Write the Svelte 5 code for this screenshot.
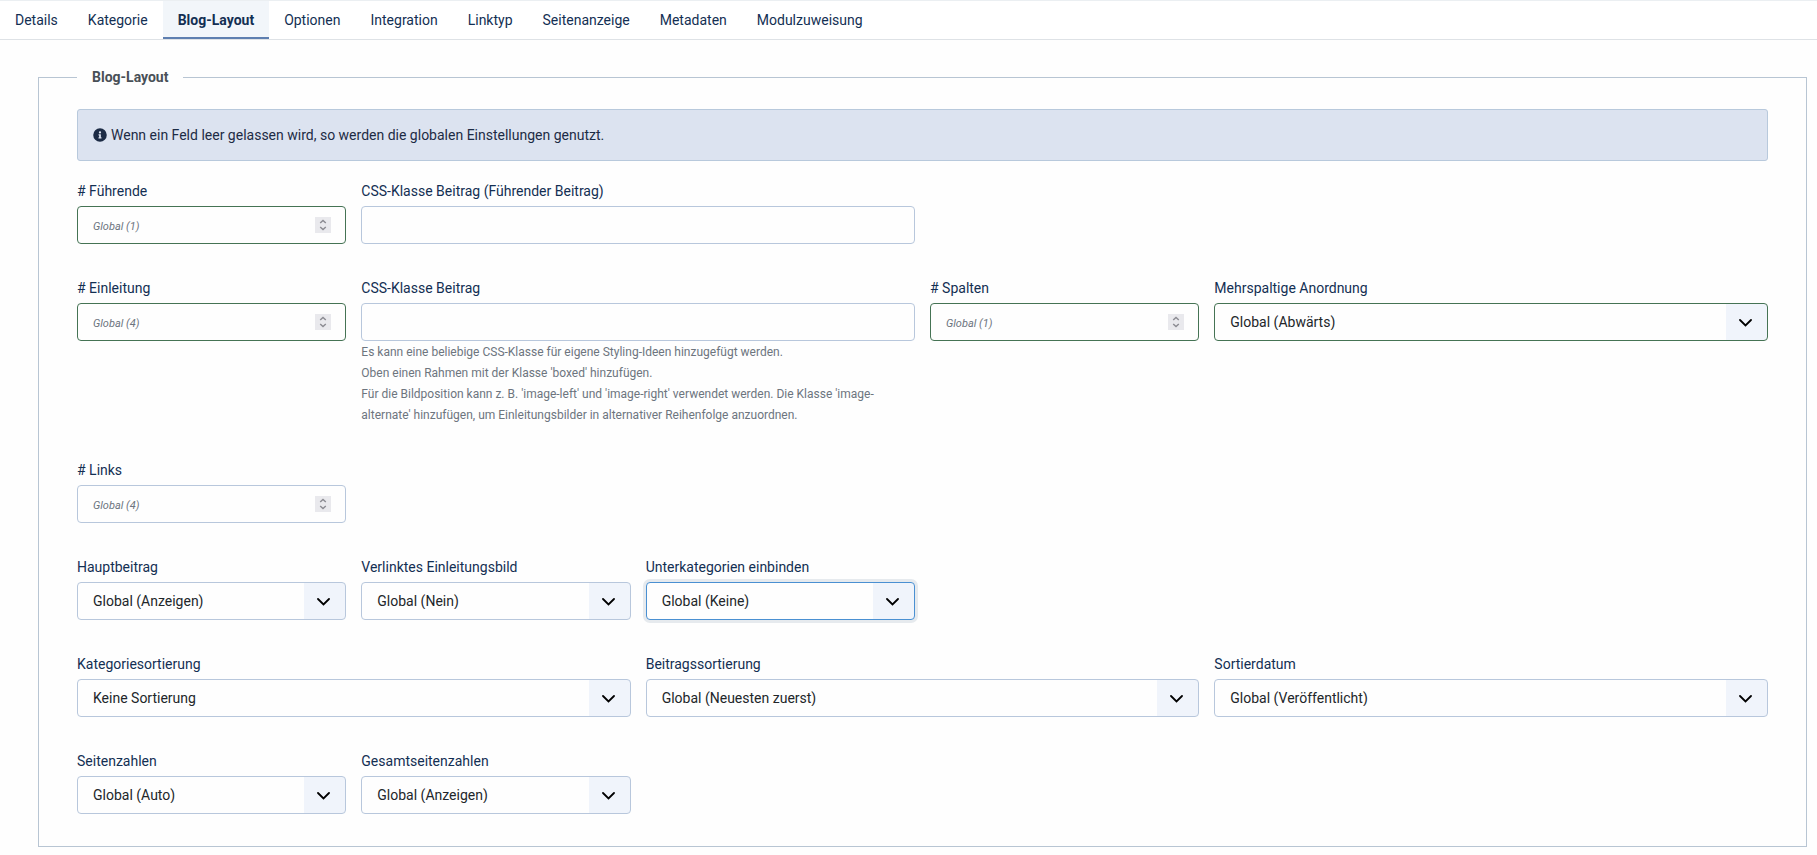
<script lang="ts">
    const tabs = [
        "Details",
        "Kategorie",
        "Blog-Layout",
        "Optionen",
        "Integration",
        "Linktyp",
        "Seitenanzeige",
        "Metadaten",
        "Modulzuweisung",
    ];
    let active = $state("Blog-Layout");

    type Field = {
        id: string;
        label: string;
        type: "number" | "text" | "select";
        span: number;
        value?: string;
        valid?: boolean;
        focused?: boolean;
        help?: string[];
    };

    const rows: Field[][] = [
        [
            { id: "leading", label: "# Führende", type: "number", span: 1, value: "Global (1)", valid: true },
            { id: "leading_class", label: "CSS-Klasse Beitrag (Führender Beitrag)", type: "text", span: 2 },
        ],
        [
            { id: "intro", label: "# Einleitung", type: "number", span: 1, value: "Global (4)", valid: true },
            {
                id: "intro_class",
                label: "CSS-Klasse Beitrag",
                type: "text",
                span: 2,
                help: [
                    "Es kann eine beliebige CSS-Klasse für eigene Styling-Ideen hinzugefügt werden.",
                    "Oben einen Rahmen mit der Klasse 'boxed' hinzufügen.",
                    "Für die Bildposition kann z. B. 'image-left' und 'image-right' verwendet werden. Die Klasse 'image-alternate' hinzufügen, um Einleitungsbilder in alternativer Reihenfolge anzuordnen.",
                ],
            },
            { id: "columns", label: "# Spalten", type: "number", span: 1, value: "Global (1)", valid: true },
            { id: "multi", label: "Mehrspaltige Anordnung", type: "select", span: 2, value: "Global (Abwärts)", valid: true },
        ],
        [{ id: "links", label: "# Links", type: "number", span: 1, value: "Global (4)" }],
        [
            { id: "featured", label: "Hauptbeitrag", type: "select", span: 1, value: "Global (Anzeigen)" },
            { id: "intro_image", label: "Verlinktes Einleitungsbild", type: "select", span: 1, value: "Global (Nein)" },
            { id: "subcats", label: "Unterkategorien einbinden", type: "select", span: 1, value: "Global (Keine)", focused: true },
        ],
        [
            { id: "orderby_pri", label: "Kategoriesortierung", type: "select", span: 2, value: "Keine Sortierung" },
            { id: "orderby_sec", label: "Beitragssortierung", type: "select", span: 2, value: "Global (Neuesten zuerst)" },
            { id: "order_date", label: "Sortierdatum", type: "select", span: 2, value: "Global (Veröffentlicht)" },
        ],
        [
            { id: "pagination", label: "Seitenzahlen", type: "select", span: 1, value: "Global (Auto)" },
            { id: "pagination_results", label: "Gesamtseitenzahlen", type: "select", span: 1, value: "Global (Anzeigen)" },
        ],
    ];

    function step(id: string, dir: number) {
        const input = document.getElementById(id) as HTMLInputElement;
        if (dir > 0) input.stepUp();
        else input.stepDown();
    }
</script>

<div class="tabs" role="tablist">
    {#each tabs as tab}
        <button
            type="button"
            role="tab"
            aria-selected={active === tab}
            class:active={active === tab}
            onclick={() => (active = tab)}>{tab}</button
        >
    {/each}
</div>

<form>
    <fieldset>
        <legend>Blog-Layout</legend>

        <div class="alert">
            <svg width="14" height="14" viewBox="0 0 512 512" aria-hidden="true">
                <path
                    fill="currentColor"
                    d="M256 8a248 248 0 1 0 0 496 248 248 0 0 0 0-496zm0 110a42 42 0 1 1 0 84 42 42 0 0 1 0-84zm56 254a12 12 0 0 1-12 12h-88a12 12 0 0 1-12-12v-24a12 12 0 0 1 12-12h12v-64h-12a12 12 0 0 1-12-12v-24a12 12 0 0 1 12-12h64a12 12 0 0 1 12 12v100h12a12 12 0 0 1 12 12z"
                />
            </svg>
            <span>Wenn ein Feld leer gelassen wird, so werden die globalen Einstellungen genutzt.</span>
        </div>

        {#each rows as row}
            <div class="row">
                {#each row as field}
                    <div class="group" class:wide={field.span === 2}>
                        <label for={field.id}>{field.label}</label>
                        <div class="control">
                            {#if field.type === "select"}
                                <select id={field.id} class:valid={field.valid} class:focused={field.focused}>
                                    <option>{field.value}</option>
                                </select>
                                <svg class="chevron" width="13" height="8" viewBox="0 0 13 8" aria-hidden="true">
                                    <path d="M1 1l5.5 5.5L12 1" fill="none" stroke="#000" stroke-width="1.8" stroke-linecap="round" />
                                </svg>
                            {:else if field.type === "number"}
                                <input id={field.id} type="number" placeholder={field.value} class:valid={field.valid} />
                                <span class="spinner">
                                    <button type="button" aria-label="Erhöhen" tabindex="-1" onclick={() => step(field.id, 1)}>
                                        <svg width="8" height="8" viewBox="0 0 8 8"><path d="M1.2 6L4 3.4 6.8 6" /></svg>
                                    </button>
                                    <button type="button" aria-label="Verringern" tabindex="-1" onclick={() => step(field.id, -1)}>
                                        <svg width="8" height="8" viewBox="0 0 8 8"><path d="M1.2 2L4 4.6 6.8 2" /></svg>
                                    </button>
                                </span>
                            {:else}
                                <input id={field.id} type="text" />
                            {/if}
                        </div>
                        {#if field.help}
                            <div class="help">
                                {#each field.help as line}
                                    <div>{line}</div>
                                {/each}
                            </div>
                        {/if}
                    </div>
                {/each}
            </div>
        {/each}
    </fieldset>
</form>

<style>
    :global(body) {
        margin: 0;
        background: #fefefe;
        color: #22262a;
        font-family: Roboto, "Liberation Sans", sans-serif;
        font-size: 14px;
    }
    .tabs {
        display: flex;
        border-top: 1px solid #ebeff2;
        border-bottom: 1px solid #dee2e6;
        background: #fff;
    }
    .tabs button {
        height: 38px;
        padding: 2px 15px 0;
        border: 0;
        border-bottom: 2px solid transparent;
        background: none;
        color: #132f53;
        font: inherit;
        cursor: pointer;
    }
    .tabs button.active {
        border-bottom-color: #5e7fb0;
        background: #f2f6fa;
        font-weight: 700;
    }
    fieldset {
        min-width: 0;
        margin: 26px 10px 8px 38px;
        padding: 20px 38px 32px;
        border: 1px solid #b8c5d3;
    }
    legend {
        padding: 0 15px;
        color: #495057;
        font-weight: 700;
        line-height: 23px;
    }
    .alert {
        display: flex;
        align-items: center;
        gap: 4px;
        height: 50px;
        margin-bottom: 20px;
        padding: 0 15px;
        border: 1px solid #b8c9dc;
        border-radius: 3px;
        background: #dce3f0;
        color: #1c2b45;
    }
    .row {
        display: grid;
        grid-template-columns: repeat(6, minmax(0, 1fr));
        column-gap: 15px;
    }
    .row + .row {
        margin-top: 34px;
    }
    .wide {
        grid-column: span 2;
    }
    label {
        display: block;
        margin-bottom: 5px;
        color: #132f53;
        line-height: 20px;
    }
    .control {
        position: relative;
    }
    input,
    select {
        display: block;
        box-sizing: border-box;
        width: 100%;
        height: 38px;
        padding: 0 15px;
        border: 1px solid #b8c7dc;
        border-radius: 4px;
        outline: 0;
        background: #fefefe;
        color: #22262a;
        font: inherit;
        appearance: none;
    }
    input[type="number"] {
        appearance: textfield;
    }
    input::placeholder {
        color: #6d757e;
        font-size: 11px;
        font-style: italic;
    }
    select {
        background: linear-gradient(#f0f4fb, #f0f4fb) right / 41px 100% no-repeat #fefefe;
    }
    .valid {
        border-color: #457354;
    }
    select:focus,
    input:focus,
    .focused {
        border-color: #4a90d2;
        box-shadow: 0 0 0 3px #e6eaee;
    }
    .chevron {
        position: absolute;
        top: 16px;
        right: 16px;
        pointer-events: none;
    }
    .spinner {
        position: absolute;
        top: 11px;
        right: 15px;
        display: flex;
        flex-direction: column;
        width: 16px;
        background: #e9e9ed;
    }
    .spinner button {
        display: flex;
        justify-content: center;
        height: 8px;
        padding: 0;
        border: 0;
        background: none;
    }
    .spinner path {
        fill: none;
        stroke: #8b8b92;
        stroke-width: 1.4;
    }
    .help {
        margin-top: 1px;
        color: #6d757e;
        font-size: 12px;
        line-height: 21px;
    }
</style>
